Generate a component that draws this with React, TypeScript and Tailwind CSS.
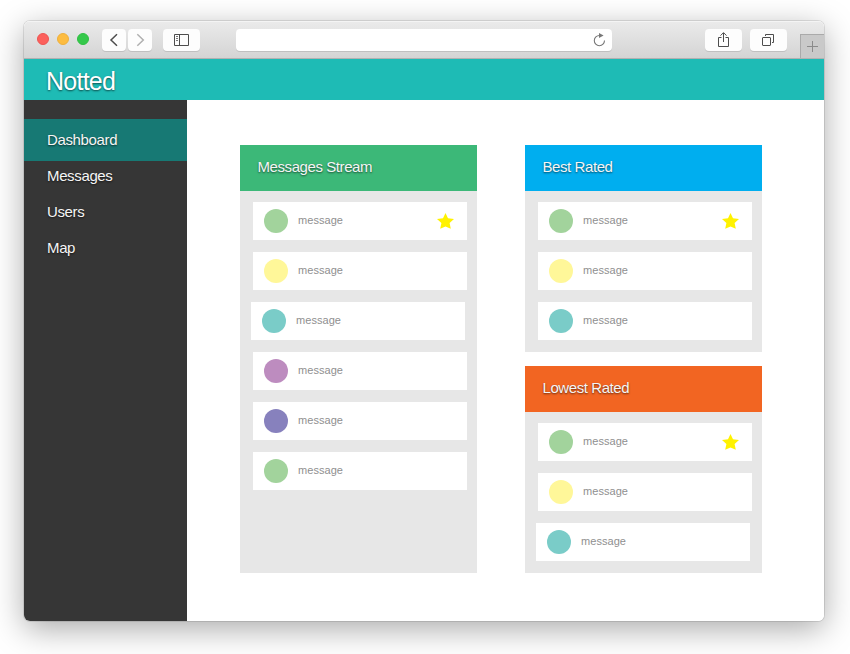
import React from "react";

const BUTTON =
  "flex h-[22px] items-center justify-center rounded bg-[#fdfdfd] shadow-[0_1px_0_#c0c0c0]";

type Message = { color: string; starred?: boolean; shifted?: boolean };

const GREEN = "bg-[#a2d39c]";
const YELLOW = "bg-[#fff799]";
const TEAL = "bg-[#7accc8]";
const PURPLE = "bg-[#bd8cbf]";
const INDIGO = "bg-[#8781bd]";

const stream: Message[] = [
  { color: GREEN, starred: true },
  { color: YELLOW },
  { color: TEAL, shifted: true },
  { color: PURPLE },
  { color: INDIGO },
  { color: GREEN },
];
const best: Message[] = [
  { color: GREEN, starred: true },
  { color: YELLOW },
  { color: TEAL },
];
const lowest: Message[] = [
  { color: GREEN, starred: true },
  { color: YELLOW },
  { color: TEAL, shifted: true },
];

function Star() {
  return (
    <svg width="17" height="16" viewBox="0 0 17 16" className="-mt-px" fill="#fff200">
      <path d="M8.5 0 11 5.2 17 6 12.6 10 13.8 15.8 8.5 13.4 3.2 15.8 4.4 10 0 6 6 5.2Z" />
    </svg>
  );
}

function Row({ color, starred, shifted }: Message) {
  return (
    <div
      className={`flex h-[38px] w-[214px] items-center bg-white pl-[11px] pr-[13px] ${
        shifted ? "ml-[11px]" : "ml-[13px]"
      }`}
    >
      <span className={`size-6 rounded-full ${color}`} />
      <span className="-mt-0.5 ml-2.5 flex-1 text-[11px] leading-4 tracking-[0.05px] text-[#8f8f8f]">message</span>
      {starred && <Star />}
    </div>
  );
}

function Panel({ title, bar, size, items }: { title: string; bar: string; size: string; items: Message[] }) {
  return (
    <section className={`w-[237px] bg-[#e7e7e7] ${size}`}>
      <h2
        className={`flex h-[46px] items-center pb-px pl-[17.5px] text-[15px] tracking-[-0.42px] text-[#f5f5f5] [text-shadow:0_1px_2px_rgba(0,0,0,.6)] ${bar}`}
      >
        {title}
      </h2>
      <div className="flex flex-col gap-3 pt-[11px]">
        {items.map((m, i) => (
          <Row key={i} {...m} />
        ))}
      </div>
    </section>
  );
}

function Toolbar() {
  return (
    <div className="flex h-[38px] items-start border-b border-[#b1b1b1] bg-linear-to-b from-[#ebebeb] to-[#d4d4d4] pt-2 shadow-[inset_0_1px_0_#f4f4f4]">
      <div className="ml-[13px] mt-1 flex gap-2">
        <span className="size-3 rounded-full border border-[#ed5552] bg-[#fc605c]" />
        <span className="size-3 rounded-full border border-[#eeb03c] bg-[#fdbc40]" />
        <span className="size-3 rounded-full border border-[#2fc042] bg-[#34c84a]" />
      </div>
      <div className="ml-[13px] flex gap-0.5">
        <button className={`w-6 ${BUTTON}`}>
          <svg width="24" height="22" viewBox="0 0 24 22" fill="none" stroke="#4d4d4d" strokeWidth="1.5">
            <path d="M15 5.3 9 11l6 5.7" />
          </svg>
        </button>
        <button className={`w-6 ${BUTTON}`}>
          <svg width="24" height="22" viewBox="0 0 24 22" fill="none" stroke="#b0b0b0" strokeWidth="1.5">
            <path d="m9.3 5.3 6 5.7-6 5.7" />
          </svg>
        </button>
      </div>
      <button className={`ml-[11px] w-[37px] ${BUTTON}`}>
        <svg width="37" height="22" viewBox="0 0 37 22" fill="none" stroke="#4d4d4d">
          <path d="M11.5 5.5h14v11h-14zM16.5 5.5v11" />
          <path d="M13 7.5h2M13 9.5h2M13 11.5h2" stroke="#777" />
        </svg>
      </button>
      <div className="ml-9 flex h-[22px] w-[376px] justify-end rounded bg-white shadow-[0_1px_0_#c0c0c0]">
        <svg width="24" height="22" viewBox="0 0 24 22" fill="none" stroke="#777" strokeWidth="1.1">
          <path d="M11.5 6.5a5.1 5.1 0 1 0 5 5.1" />
          <path d="m11 3.9 4.6 2.6-4.6 2.5z" fill="#777" stroke="none" />
        </svg>
      </div>
      <button className={`ml-[93px] w-[37px] ${BUTTON}`}>
        <svg width="37" height="22" viewBox="0 0 37 22" fill="none" stroke="#4d4d4d">
          <path d="M16.5 8.5h-3v9h10v-9h-3M18.5 13V4M15.5 6.6l3-3 3 3" />
        </svg>
      </button>
      <button className={`ml-2 w-[37px] ${BUTTON}`}>
        <svg width="37" height="22" viewBox="0 0 37 22" fill="none" stroke="#4d4d4d">
          <rect x="12.5" y="8.5" width="8" height="8" rx=".5" />
          <path d="M15.5 7V5.5h8v8H22" />
        </svg>
      </button>
      <button className="ml-[13px] mt-[5px] flex h-6 w-6 items-center justify-center border-l border-t border-[#aaa] bg-[#c9c9c9]">
        <svg width="23" height="23" viewBox="0 0 23 23" fill="none" stroke="#8a8a8a">
          <path d="M6 11.5h11M11.5 6v11" />
        </svg>
      </button>
    </div>
  );
}

const NAV_TEXT = "flex h-9 items-center pl-[23px]";

export default function App() {
  return (
    <div className="h-[654px] w-[850px] overflow-hidden bg-white px-[24px] pt-[21px] font-['Liberation_Sans',Arial,sans-serif]">
      <div className="h-[600px] w-[800px] rounded-[6px] shadow-[0_0_0_1px_rgba(0,0,0,.1),0_8px_32px_rgba(0,0,0,.34)]">
        <div className="flex h-full flex-col overflow-hidden rounded-[6px] bg-white">
          <Toolbar />
          <header className="flex h-[41px] shrink-0 items-center bg-[#1ebbb5] pl-[22px] pt-[3px] text-[25px] leading-none tracking-[-0.75px] text-white [text-shadow:0_1px_2px_rgba(0,0,0,.6)]">
            Notted
          </header>
          <div className="flex min-h-0 flex-1">
            <nav className="w-[163px] bg-[#363636] pt-[19px] text-[15px] tracking-[-0.36px] text-[#f5f5f5] [text-shadow:0_1px_2px_rgba(0,0,0,.6)]">
              <div className="flex h-[42px] items-center bg-[#177974] pl-[23px]">Dashboard</div>
              <div className="-mt-[3px]">
                <div className={NAV_TEXT}>Messages</div>
                <div className={NAV_TEXT}>Users</div>
                <div className={NAV_TEXT}>Map</div>
              </div>
            </nav>
            <main className="flex flex-1 items-start gap-12 pl-[53px] pt-[45px]">
              <Panel title="Messages Stream" bar="bg-[#3cb878]" size="h-[428px]" items={stream} />
              <div className="flex flex-col gap-3.5">
                <Panel title="Best Rated" bar="bg-[#00aeef]" size="h-[207px]" items={best} />
                <Panel title="Lowest Rated" bar="bg-[#f26522]" size="h-[207px]" items={lowest} />
              </div>
            </main>
          </div>
        </div>
      </div>
    </div>
  );
}
